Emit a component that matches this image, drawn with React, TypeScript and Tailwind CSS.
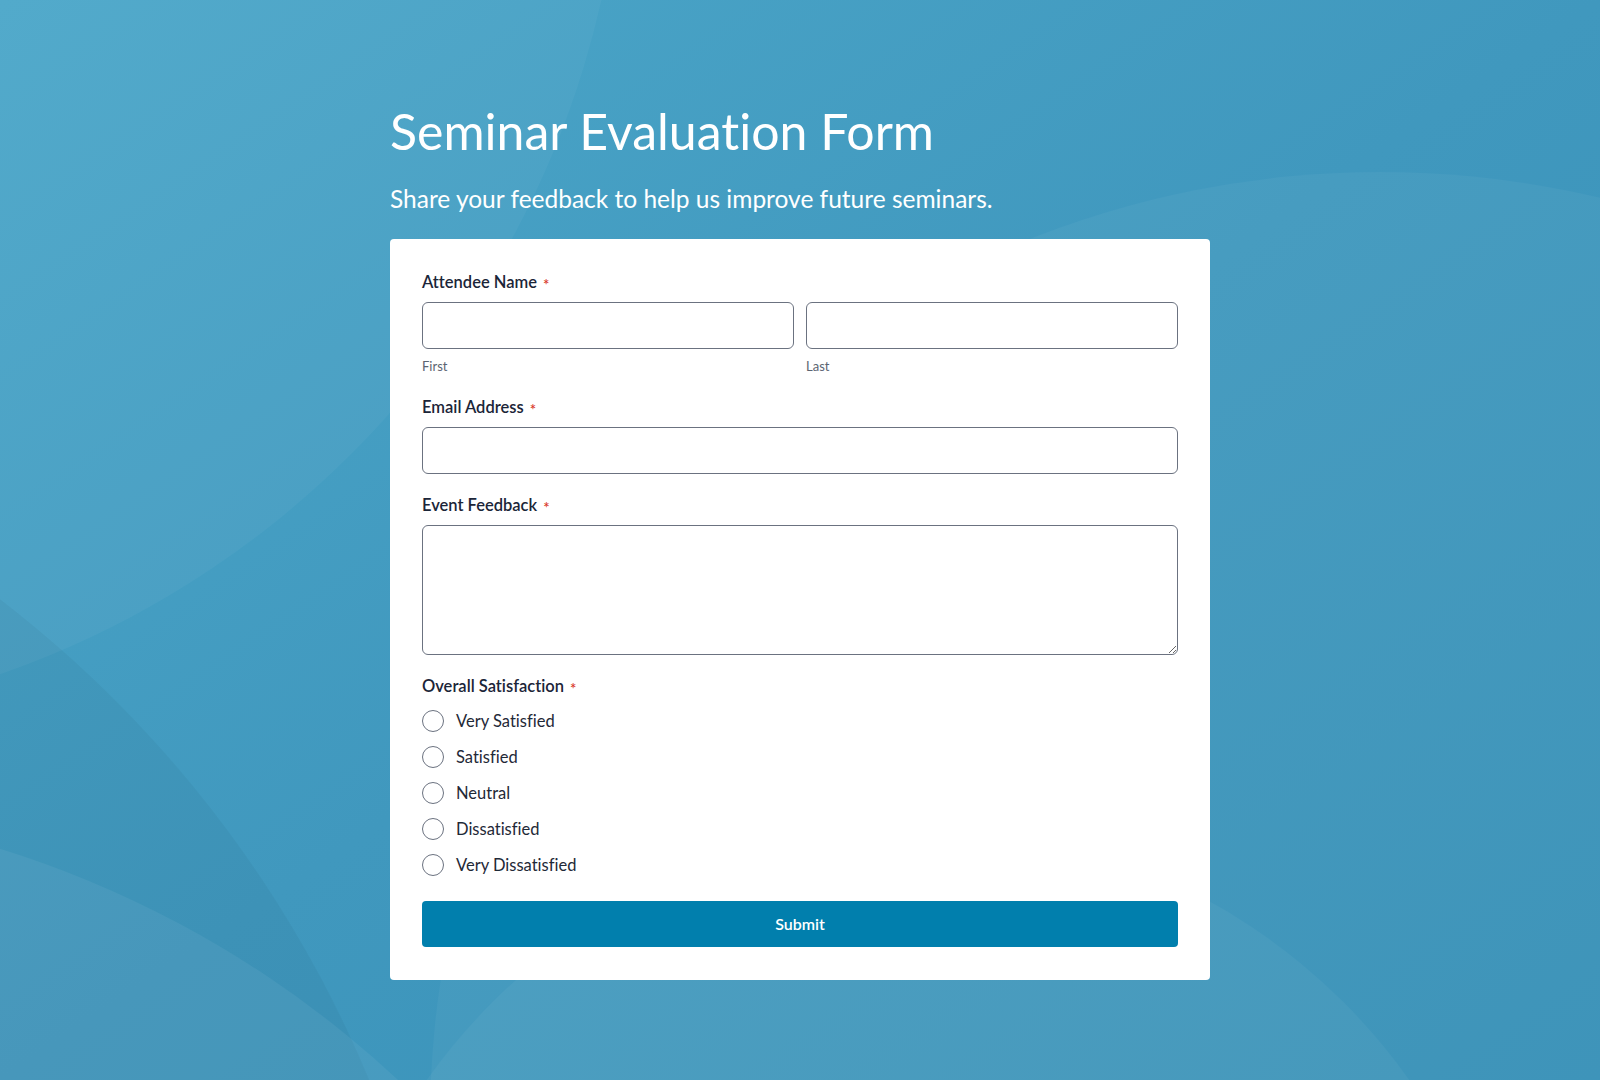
import React from "react";

const options = [
  "Very Satisfied",
  "Satisfied",
  "Neutral",
  "Dissatisfied",
  "Very Dissatisfied",
];

function Label({ children }: { children: React.ReactNode }) {
  return (
    <div className="flex items-center text-[16.5px] leading-6 font-semibold text-[#1b2538]">
      <span>{children}</span>
      <span className="ml-[6px] mt-[4px] text-[15px] leading-none text-[#d93a2b]">*</span>
    </div>
  );
}

export default function App() {
  return (
    <div
      className="relative min-h-screen w-full overflow-hidden bg-gradient-to-br from-[#4ca7c9] via-[#4098be] to-[#3790b7] [font-variant-ligatures:none]"
      style={{ fontFamily: "Lato, 'Noto Sans', sans-serif" }}
    >
      {/* soft background arcs */}
      <div className="absolute -left-[1236px] -top-[1134px] w-[1860px] h-[1860px] rounded-full bg-white/[0.035]" />
      <div className="absolute left-[430px] top-[172px] w-[1900px] h-[1900px] rounded-full bg-white/[0.035]" />
      <div className="absolute -left-[1887px] top-[357px] w-[2346px] h-[2346px] rounded-full bg-black/[0.035]" />
      <div className="absolute -left-[1340px] top-[802px] w-[2066px] h-[2066px] rounded-full bg-white/[0.05]" />
      <div className="absolute left-[316px] top-[826px] w-[1204px] h-[1204px] rounded-full bg-white/[0.035]" />

      <div className="relative z-10 mx-auto w-[820px] pt-[102px] pb-[100px]">
        <h1 className="text-[50px] leading-[58px] font-normal text-white">
          Seminar Evaluation Form
        </h1>
        <p className="mt-[23px] text-[24.5px] leading-8 text-white">
          Share your feedback to help us improve future seminars.
        </p>

        <div className="mt-[24px] rounded-[4px] bg-white px-8 pt-[31px] pb-[33px]">
          {/* Name */}
          <Label>Attendee Name</Label>
          <div className="mt-2 grid grid-cols-2 gap-3">
            <div>
              <input className="block h-[47px] w-full rounded-[6px] border border-[#6b7280] bg-white px-3 outline-none" />
              <div className="mt-[9px] text-[13px] leading-4 text-[#5b6472]">First</div>
            </div>
            <div>
              <input className="block h-[47px] w-full rounded-[6px] border border-[#6b7280] bg-white px-3 outline-none" />
              <div className="mt-[9px] text-[13px] leading-4 text-[#5b6472]">Last</div>
            </div>
          </div>

          {/* Email */}
          <div className="mt-[21px]">
            <Label>Email Address</Label>
            <input className="mt-2 block h-[47px] w-full rounded-[6px] border border-[#6b7280] bg-white px-3 outline-none" />
          </div>

          {/* Feedback */}
          <div className="mt-[19px]">
            <Label>Event Feedback</Label>
            <textarea className="mt-2 block h-[130px] w-full rounded-[6px] border border-[#6b7280] bg-white px-3 py-2 outline-none" />
          </div>

          {/* Satisfaction */}
          <div className="mt-[19px]">
            <Label>Overall Satisfaction</Label>
            <div className="mt-[5px] flex flex-col">
              {options.map((o) => (
                <label key={o} className="flex h-9 items-center gap-3 cursor-pointer">
                  <span className="h-[22px] w-[22px] rounded-full border border-[#6b7280] bg-white" />
                  <span className="text-[16.5px] leading-6 text-[#1f2937]">{o}</span>
                </label>
              ))}
            </div>
          </div>

          <button className="mt-[18px] flex h-[46px] w-full items-center justify-center rounded-[4px] bg-[#017fad] text-[16px] font-semibold text-white">
            Submit
          </button>
        </div>
      </div>
    </div>
  );
}
